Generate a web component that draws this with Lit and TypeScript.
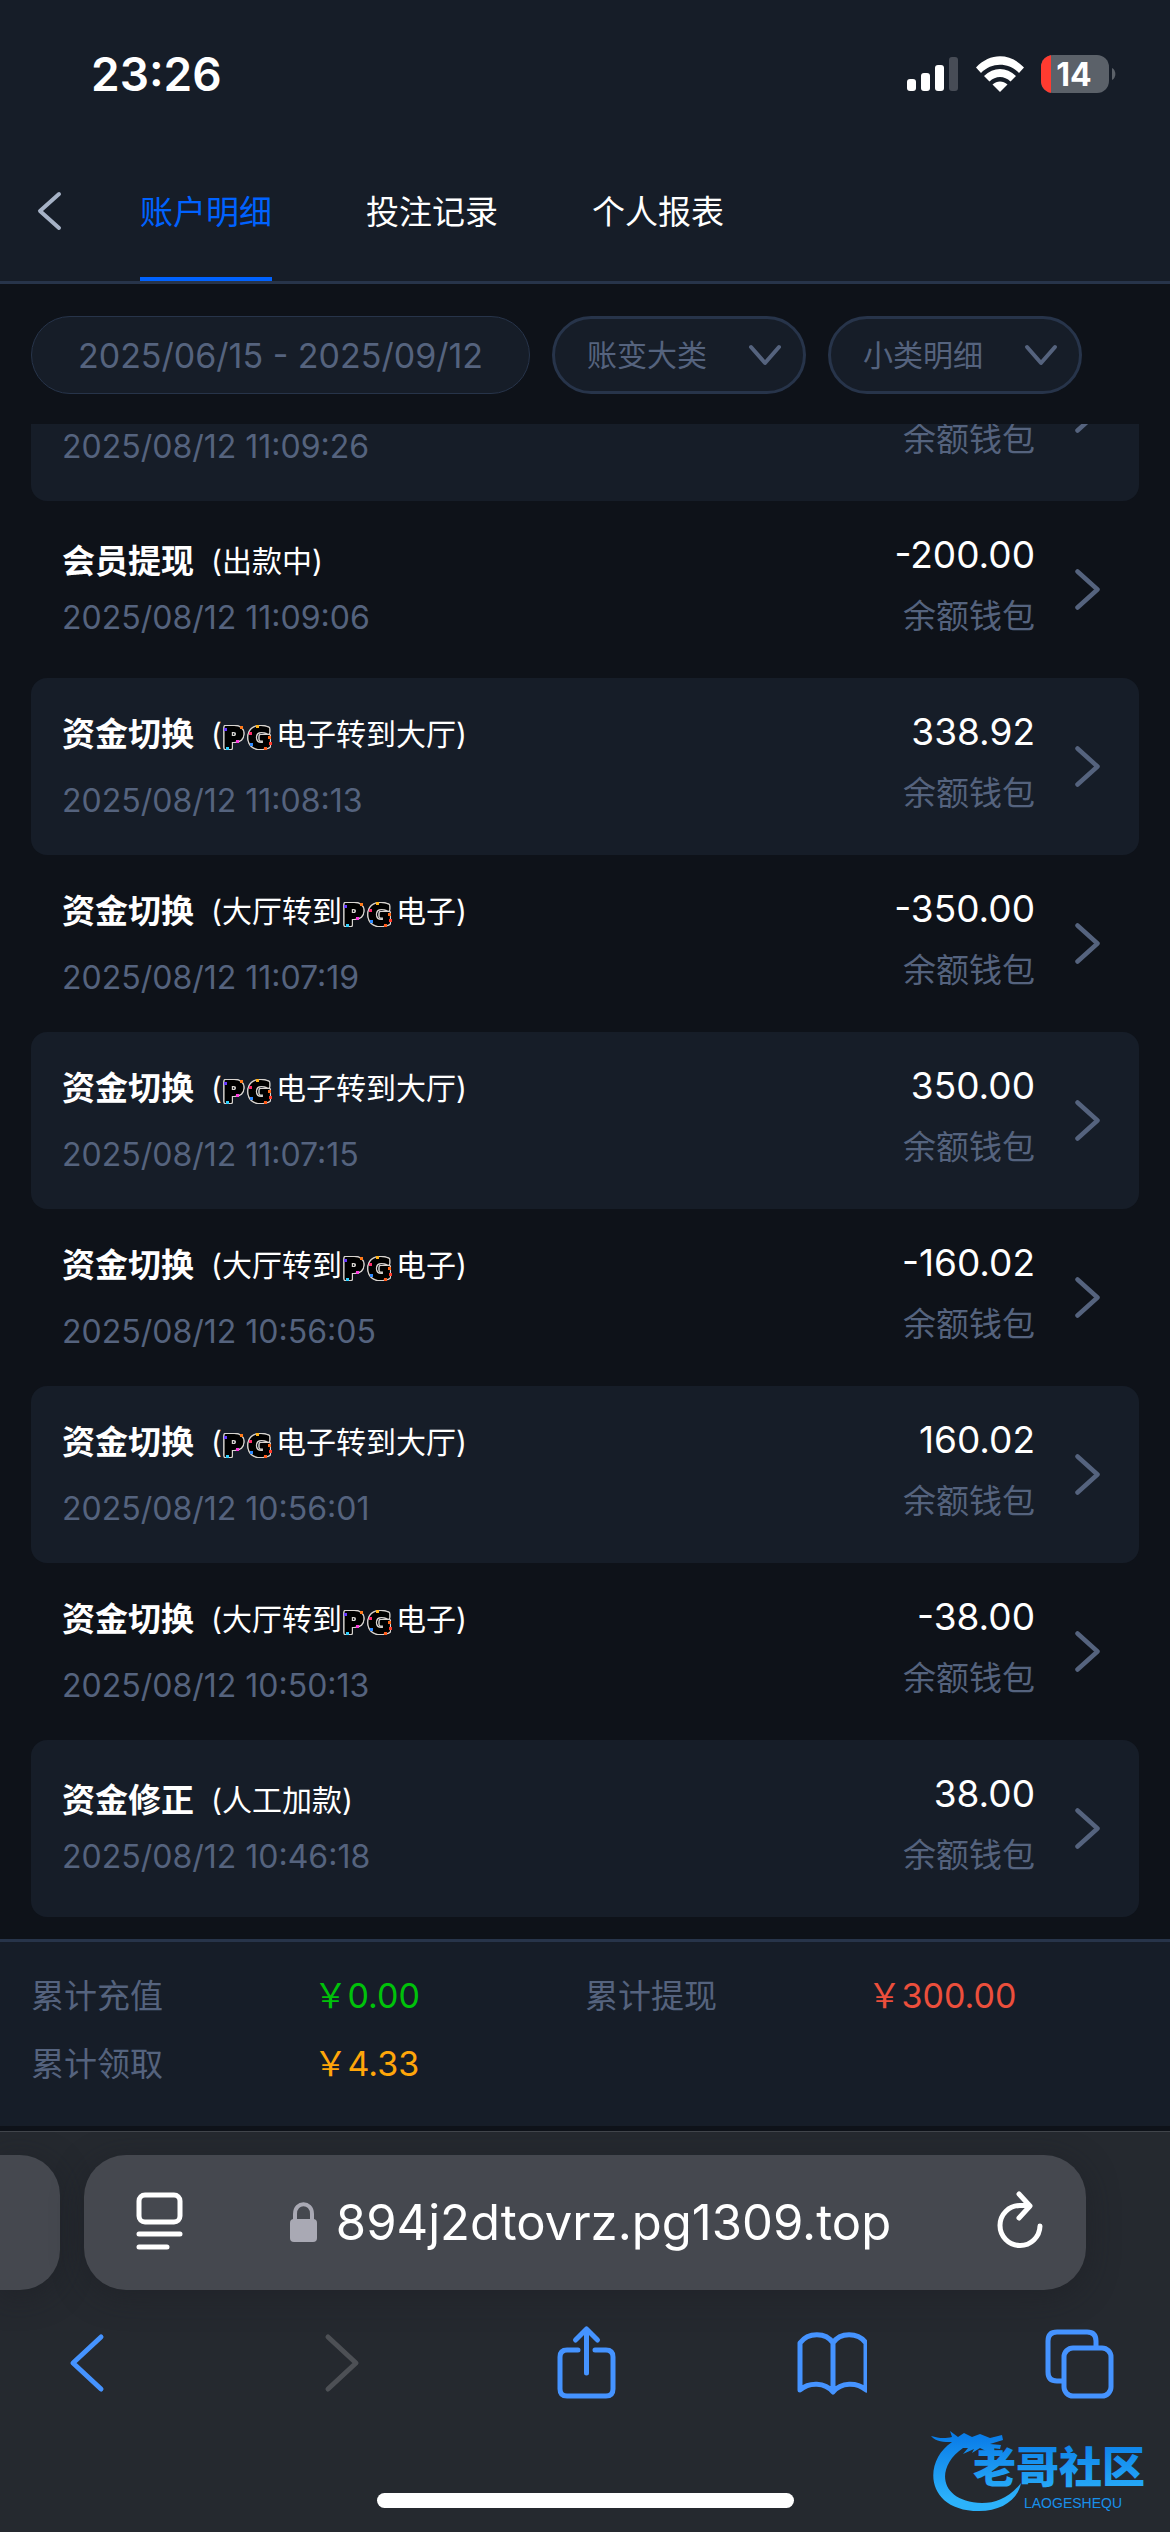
import { LitElement, html, css, svg, nothing } from "lit";
import { customElement, property, state } from "lit/decorators.js";
import { classMap } from "lit/directives/class-map.js";

interface Entry {
  title: string;
  before: string;
  badge: boolean;
  after: string;
  time: string;
  amount: string;
}

const IN = "电子转到大厅)";
const toHall = (time: string, amount: string): Entry => ({
  title: "资金切换", before: "(", badge: true, after: IN, time, amount,
});
const toGame = (time: string, amount: string): Entry => ({
  title: "资金切换", before: "(大厅转到", badge: true, after: "电子)", time, amount,
});

const ENTRIES: Entry[] = [
  { title: "", before: "", badge: true, after: "", time: "2025/08/12 11:09:26", amount: "" },
  { title: "会员提现", before: "(出款中)", badge: false, after: "", time: "2025/08/12 11:09:06", amount: "-200.00" },
  toHall("2025/08/12 11:08:13", "338.92"),
  toGame("2025/08/12 11:07:19", "-350.00"),
  toHall("2025/08/12 11:07:15", "350.00"),
  toGame("2025/08/12 10:56:05", "-160.02"),
  toHall("2025/08/12 10:56:01", "160.02"),
  toGame("2025/08/12 10:50:13", "-38.00"),
  { title: "资金修正", before: "(人工加款)", badge: false, after: "", time: "2025/08/12 10:46:18", amount: "38.00" },
];

/* Game brand badge shown inside a row's note. */
@customElement("pg-badge")
export class PgBadge extends LitElement {
  static styles = css`
    :host { display: inline-flex; }
    .art { display: block; width: 54px; height: 34px; }
    .letters {
      filter: drop-shadow(1px 0 #d8d4d0) drop-shadow(-1px 0 #d8d4d0) drop-shadow(0 1px #d8d4d0) drop-shadow(0 -1px #d8d4d0);
    }
    .letter {
      font: 700 28px "DejaVu Sans", sans-serif;
      fill: #000;
      stroke: #000;
      stroke-width: 2;
      stroke-linejoin: round;
    }
  `;
  render() {
    return html`<svg class="art" viewBox="0 0 54 34">
      <g class="letters">
        <text class="letter" x="1" y="29">P</text>
        <text class="letter" x="26" y="29">G</text>
      </g>
      <rect x="2" y="9" width="3" height="3" fill="#6a3cff" />
      <rect x="18" y="7" width="3" height="3" fill="#ff7a1a" />
      <rect x="14" y="21" width="3" height="3" fill="#ff3ee0" />
      <rect x="4" y="28" width="3" height="3" fill="#2fd0ff" />
      <rect x="34" y="6" width="3" height="3" fill="#ffb31a" />
      <rect x="27" y="13" width="3" height="3" fill="#ff2a6a" />
      <rect x="46" y="17" width="3" height="3" fill="#ff6a1a" />
      <rect x="28" y="24" width="3" height="3" fill="#2f8bff" />
      <rect x="47" y="23" width="3" height="3" fill="#ff3a2a" />
      <rect x="42" y="28" width="3" height="3" fill="#ff5a1a" />
    </svg>`;
  }
}

@customElement("entry-row")
export class EntryRow extends LitElement {
  @property({ attribute: false }) entry!: Entry;
  @property({ type: Boolean }) shaded = false;

  static styles = css`
    :host { display: block; flex: none; }
    .row {
      display: flex;
      align-items: center;
      box-sizing: border-box;
      height: 177px;
      padding: 0 39px 0 31px;
      border-radius: 16px;
      color: #fff;
      text-decoration: none;
    }
    .shaded { background: #161d28; }
    .info { display: flex; flex-direction: column; gap: 5px; flex: 1; }
    .head { display: flex; gap: 17px; height: 52px; line-height: 52px; }
    .tall { height: 64px; line-height: 56px; }
    .title { font-size: 33px; font-weight: 700; }
    .note { display: flex; font-size: 30px; }
    pg-badge { align-items: center; height: 60px; }
    .time { font-size: 32px; line-height: 52px; color: #55637e; }
    .sum { display: flex; flex-direction: column; align-items: flex-end; gap: 9px; padding-bottom: 8px; }
    .amount { font-size: 37px; line-height: 52px; height: 52px; }
    .wallet { font-size: 33px; line-height: 52px; color: #55637e; }
    .go { width: 25px; height: 41px; margin-left: 40px; }
  `;

  render() {
    const e = this.entry;
    return html`<a href="#" class=${classMap({ row: true, shaded: this.shaded })}>
      <div class="info">
        <div class=${classMap({ head: true, tall: e.badge })}>
          ${e.title
            ? html`<span class="title">${e.title}</span>
                <span class="note"
                  ><span>${e.before}</span>${e.badge ? html`<pg-badge></pg-badge>` : nothing}<span>${e.after}</span></span
                >`
            : nothing}
        </div>
        <time class="time">${e.time}</time>
      </div>
      <div class="sum">
        <span class="amount">${e.amount}</span>
        <span class="wallet">余额钱包</span>
      </div>
      <svg class="go" viewBox="0 0 25 41">
        <path d="M2.5 2.5 L22.5 20.5 L2.5 38.5" fill="none" stroke="#55637e" stroke-width="4.5" stroke-linecap="round" stroke-linejoin="round" />
      </svg>
    </a>`;
  }
}

@customElement("status-bar")
export class StatusBar extends LitElement {
  static styles = css`
    :host {
      display: flex;
      align-items: center;
      justify-content: space-between;
      height: 148px;
      padding: 0 53px 0 91px;
    }
    .clock { font-size: 46px; font-weight: 600; }
    .signals { display: flex; align-items: center; gap: 16px; }
    .bars { width: 52px; height: 36px; }
    .wifi { width: 50px; height: 38px; }
    .battery { width: 76px; height: 38px; }
    .level { font: 700 32px Inter, sans-serif; fill: #fff; }
  `;
  render() {
    return html`<span class="clock">23:26</span>
      <div class="signals">
        <svg class="bars" viewBox="0 0 52 36">
          <rect x="0" y="23" width="9" height="12" rx="3" fill="#fff" />
          <rect x="14" y="17" width="9" height="18" rx="3" fill="#fff" />
          <rect x="28" y="9" width="9" height="26" rx="3" fill="#fff" />
          <rect x="42" y="1" width="9" height="34" rx="3" fill="#474c56" />
        </svg>
        <svg class="wifi" viewBox="0 0 50 38">
          <path d="M1 12.5 C15 -2.5 35 -2.5 49 12.5 L44 18 C33.500 7 16.500 7 6 18 Z" fill="#fff" />
          <path d="M9 21 C18.500 11.500 31.500 11.500 41 21 L35.500 26.500 C29.500 20.500 20.500 20.500 14.500 26.500 Z" fill="#fff" />
          <path d="M17.500 29.500 C22 25.500 28 25.500 32.500 29.500 L25 37 Z" fill="#fff" />
        </svg>
        <svg class="battery" viewBox="0 0 76 38">
          <clipPath id="cell"><rect width="68" height="38" rx="12" /></clipPath>
          <g clip-path="url(#cell)">
            <rect width="68" height="38" fill="#5b6169" />
            <rect width="10" height="38" fill="#ff3b30" />
          </g>
          <path d="M71 13 C75.500 15 75.500 23 71 25 Z" fill="#5b6169" />
          <text class="level" x="33" y="31" text-anchor="middle">14</text>
        </svg>
      </div>`;
  }
}

const navIcons = [
  { name: "后退", off: false, art: svg`<path d="M50 13 L22 39 L50 65" />` },
  { name: "前进", off: true, art: svg`<path d="M29 13 L57 39 L29 65" />` },
  {
    name: "共享", off: false,
    art: svg`<path d="M31 26 H20 Q13 26 13 33 V65 Q13 72 20 72 H59 Q66 72 66 65 V33 Q66 26 59 26 H48" /><path d="M39.500 49 V5 M28.500 16 L39.500 5 L50.500 16" />`,
  },
  {
    name: "书签", off: false,
    art: svg`<path d="M38 19 C31 8 13 8 5 19 V66 C14 58 30 58 38 68 C46 58 62 58 71 66 V19 C63 8 45 8 38 19 Z M38 19 V67" />`,
  },
  {
    name: "标签页", off: false,
    art: svg`<path d="M20 57 H14 Q5 57 5 48 V17 Q5 8 14 8 H44 Q53 8 53 17 V22" /><rect x="21" y="24" width="47" height="48" rx="9" />`,
  },
];

@customElement("browser-bar")
export class BrowserBar extends LitElement {
  static styles = css`
    :host {
      display: block;
      position: relative;
      overflow: hidden;
      border-top: 1px solid #41454b;
      background: #25292f;
    }
    button {
      padding: 0;
      border: 0;
      background: none;
      color: inherit;
      font: inherit;
    }
    .tabs { display: flex; gap: 24px; padding: 23px 84px 0 0; }
    .previous {
      flex: none;
      width: 60px;
      height: 135px;
      border-radius: 0 40px 40px 0;
      background: #45484f;
      box-shadow: 0 6px 30px #1b1e2480;
    }
    .field {
      display: flex;
      align-items: center;
      justify-content: space-between;
      box-sizing: border-box;
      flex: 1;
      height: 135px;
      padding: 0 40px 0 50px;
      border-radius: 42px;
      background: #45484f;
      box-shadow: 0 6px 30px #1b1e2480;
      color: #fff;
    }
    .tool { width: 50px; height: 60px; }
    .address { display: flex; align-items: center; gap: 18px; font-size: 49px; }
    .lock { width: 29px; height: 41px; }
    .nav { display: flex; justify-content: space-between; padding: 34px 55px 0 51px; }
    .key { display: block; width: 72px; height: 76px; }
    .icon {
      fill: none;
      stroke: #4593ff;
      stroke-width: 5;
      stroke-linecap: round;
      stroke-linejoin: round;
    }
    .off { stroke: #4d5055; }
    .light { stroke: #fff; }
    .home {
      width: 417px;
      height: 15px;
      margin: 93px auto 24px;
      border-radius: 8px;
      background: #fff;
    }
    .mark { position: absolute; right: 14px; bottom: 20px; width: 226px; height: 84px; }
    .brand { font: 900 43px "Noto Sans CJK SC", sans-serif; }
    .latin { font: 400 14px "Liberation Sans", sans-serif; fill: #1890ea; }
  `;
  render() {
    return html`<div class="tabs">
        <div class="previous"></div>
        <div class="field">
          <button aria-label="页面设置">
            <svg class="tool icon light" viewBox="0 0 50 60">
              <rect x="5" y="4" width="41" height="27" rx="6" />
              <path d="M5 43 H46 M5 56 H33" />
            </svg>
          </button>
          <button class="address">
            <svg class="lock" viewBox="0 0 29 41">
              <path d="M6 20 V12 C6 -1 23 -1 23 12 V20" fill="none" stroke="#a9a9b4" stroke-width="4" />
              <rect x="1" y="17" width="27" height="23" rx="4" fill="#a9a9b4" />
            </svg>
            <span>894j2dtovrz.pg1309.top</span>
          </button>
          <button aria-label="重新载入">
            <svg class="tool icon light" viewBox="0 0 50 60">
              <path d="M44 35 A20 20 0 1 1 24 14.500 H33 M23 3 L34 15 L23 27" />
            </svg>
          </button>
        </div>
      </div>
      <div class="nav">
        ${navIcons.map(
          (n) => html`<button aria-label=${n.name} ?disabled=${n.off}>
            <svg class=${classMap({ key: true, icon: true, off: n.off })} viewBox="0 0 72 76">${n.art}</svg>
          </button>`
        )}
      </div>
      <div class="home"></div>
      <svg class="mark" viewBox="0 0 226 84">
        <defs>
          <linearGradient id="sky" x1="0" y1="0" x2="0" y2="84" gradientUnits="userSpaceOnUse">
            <stop offset="0.1" stop-color="#0a7de8" />
            <stop offset="0.85" stop-color="#2cb2fb" />
          </linearGradient>
        </defs>
        <g fill="url(#sky)">
          <path d="M22 14 C-8 34 -4 83 49 83 C71 83 88 72 91 55 C79 70 66 75 52 75 C10 74 4 40 33 20 L38 20 L33 26 L44 21 L42 25 L50 20 L58 24 L62 20 L70 21 L71 17 L60 16 L73 12 L72 7 L60 10 L50 6 L42 9 L34 5 L28 9 L20 3 L22 9 C14 11 8 10 1 8 C6 14 14 14 22 14 Z" />
          <text class="brand" x="43" y="55">老哥社区</text>
        </g>
        <text class="latin" x="94" y="80">LAOGESHEQU</text>
      </svg>`;
  }
}

@customElement("app-root")
export class AppRoot extends LitElement {
  @state() private active = 0;

  static styles = css`
    :host {
      display: flex;
      flex-direction: column;
      height: 100vh;
      background: #0e1219;
      color: #fff;
      font-family: Inter, "Noto Sans CJK SC", sans-serif;
    }
    .top { background: #161d28; border-bottom: 3px solid #27344a; }
    .bar { display: flex; height: 133px; padding-left: 37px; }
    .back, .tab { padding: 0; border: 0; background: none; font: inherit; }
    .back { display: flex; align-items: center; width: 103px; padding-bottom: 7px; }
    .back-icon { width: 26px; height: 42px; }
    .tabs { display: flex; gap: 94px; }
    .tab {
      border-top: 4px solid transparent;
      border-bottom: 4px solid transparent;
      padding-bottom: 10px;
      color: #fff;
      font-size: 33px;
    }
    .on { color: #0062ff; border-bottom-color: #0062ff; }
    .filters {
      display: grid;
      grid-template-columns: 499fr 254fr 254fr;
      gap: 22px;
      padding: 32px 88px 30px 31px;
    }
    .pill {
      box-sizing: border-box;
      width: 100%;
      height: 78px;
      border: 3px solid #27344a;
      border-radius: 39px;
      background: #161d28;
      color: #55637e;
      font: inherit;
      font-size: 30px;
    }
    .range { border-width: 1px; font-size: 34px; }
    .choice { position: relative; display: block; }
    .select { appearance: none; padding: 0 32px; }
    .caret { position: absolute; right: 24px; top: 28px; width: 34px; height: 22px; pointer-events: none; }
    .list {
      display: flex;
      flex-direction: column;
      justify-content: flex-end;
      flex: 1;
      min-height: 0;
      overflow: hidden;
      padding: 0 31px 22px;
    }
    .totals {
      display: grid;
      grid-template-columns: 1fr 1fr;
      margin: 0 0 5px;
      padding: 20px 31px 48px;
      border-top: 3px solid #27344a;
      background: #161d28;
      font-size: 33px;
      line-height: 68px;
      height: 116px;
    }
    .total { display: grid; grid-template-columns: 51% 49%; height: 68px; }
    .label { color: #55637e; }
    .value { margin: 0; font-size: 34px; }
    .green { color: #00c20a; }
    .red { color: #ec4f3c; }
    .amber { color: #ffa60a; }
  `;

  private select(label: string) {
    return html`<label class="choice">
      <select class="pill select" aria-label=${label}>
        <option>${label}</option>
      </select>
      <svg class="caret" viewBox="0 0 34 22">
        <path d="M3 3 L17 19 L31 3" fill="none" stroke="#55637e" stroke-width="4" stroke-linecap="round" stroke-linejoin="round" />
      </svg>
    </label>`;
  }

  private total(label: string, value: string, tone: string) {
    return html`<div class="total">
      <dt class="label">${label}</dt>
      <dd class="value ${tone}">${value}</dd>
    </div>`;
  }

  render() {
    return html`<header class="top">
        <status-bar></status-bar>
        <div class="bar">
          <button class="back" aria-label="返回">
            <svg class="back-icon" viewBox="0 0 26 42">
              <path d="M22 4 L3 21 L22 38" fill="none" stroke="#a6b2c6" stroke-width="4" stroke-linecap="round" stroke-linejoin="round" />
            </svg>
          </button>
          <nav class="tabs" role="tablist">
            ${["账户明细", "投注记录", "个人报表"].map(
              (name, i) => html`<button
                role="tab"
                aria-selected=${i === this.active}
                class=${classMap({ tab: true, on: i === this.active })}
                @click=${() => (this.active = i)}
              >${name}</button>`
            )}
          </nav>
        </div>
      </header>
      <div class="filters">
        <button class="pill range">2025/06/15 - 2025/09/12</button>
        ${this.select("账变大类")} ${this.select("小类明细")}
      </div>
      <main class="list">
        ${ENTRIES.map((e, i) => html`<entry-row .entry=${e} ?shaded=${i % 2 === 0}></entry-row>`)}
      </main>
      <dl class="totals">
        ${this.total("累计充值", "￥0.00", "green")} ${this.total("累计提现", "￥300.00", "red")}
        ${this.total("累计领取", "￥4.33", "amber")}
      </dl>
      <browser-bar></browser-bar>`;
  }
}
